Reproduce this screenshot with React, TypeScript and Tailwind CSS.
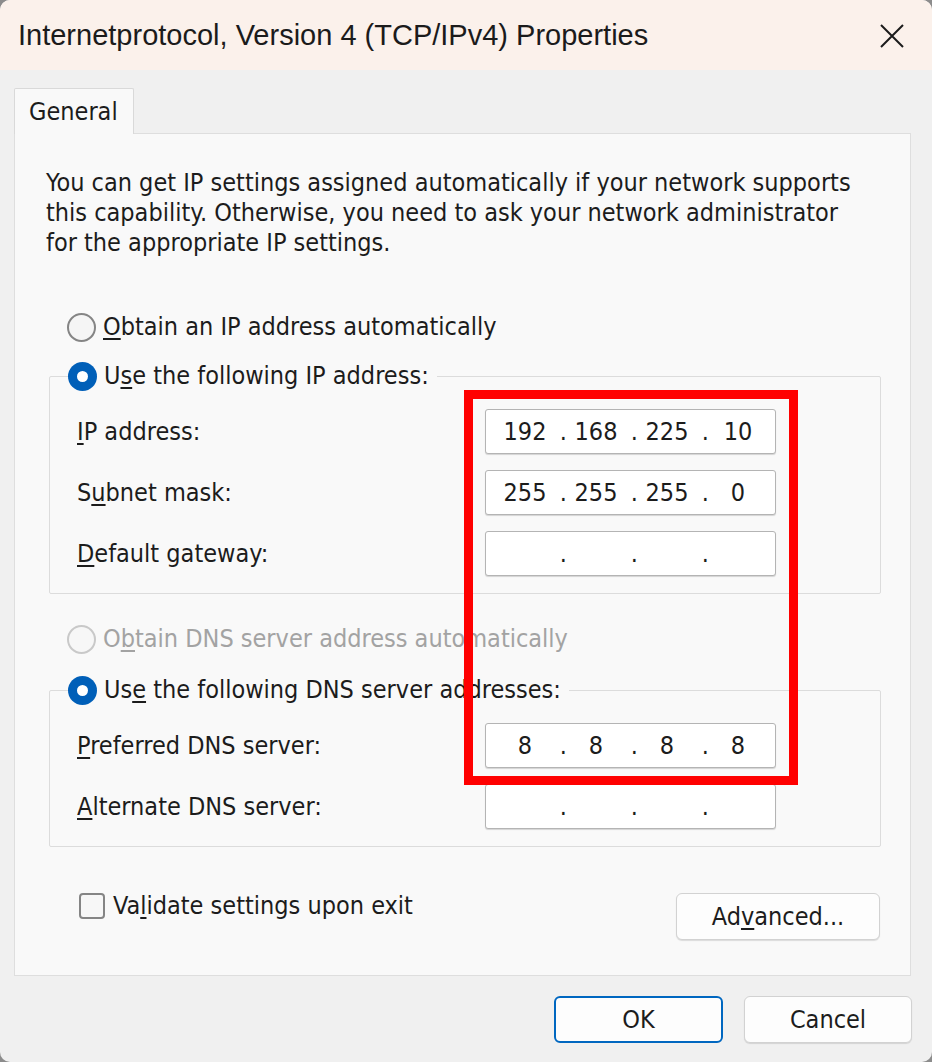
import React from "react";

const body = { fontFamily: '"DejaVu Sans Condensed", "Liberation Sans", Arial, sans-serif' };

function Radio({ checked, disabled }: { checked?: boolean; disabled?: boolean }) {
    if (checked) {
        return (
            <span className="flex items-center justify-center w-[29px] h-[29px] rounded-full bg-[#005fb8] shrink-0">
                <span className="w-[11px] h-[11px] rounded-full bg-white" />
            </span>
        );
    }
    return (
        <span
            className={
                disabled
                    ? "w-[29px] h-[29px] rounded-full border-2 border-[#c9c9c9] bg-[#f7f7f7] shrink-0"
                    : "w-[29px] h-[29px] rounded-full border-2 border-[#858585] bg-[#f5f5f5] shrink-0"
            }
        />
    );
}

function IpField({ parts }: { parts: string[] }) {
    return (
        <div className="flex items-center w-[291px] h-[45px] pl-[10px] bg-white border border-[#b4b4b4] rounded-[3px] shadow-[0_1px_1px_rgba(0,0,0,0.15)] text-[25px] text-[#1c1c1c]">
            {parts.map((p, i) => (
                <React.Fragment key={i}>
                    <span className="w-[58px] text-center">{p}</span>
                    {i < 3 && <span className="w-[13px] text-right">.</span>}
                </React.Fragment>
            ))}
        </div>
    );
}

function Row({ label, parts }: { label: React.ReactNode; parts: string[] }) {
    return (
        <div className="flex items-center justify-between">
            <span>{label}</span>
            <IpField parts={parts} />
        </div>
    );
}

function Group({ legend, children }: { legend: React.ReactNode; children: React.ReactNode }) {
    return (
        <fieldset className="border border-[#dcdcdc] rounded-[2px] ml-[34px] mr-[29px]">
            <legend className="ml-[18px] pr-[8px] h-[30px] flex items-center gap-[7px]">
                <Radio checked />
                <span>{legend}</span>
            </legend>
            <div className="flex flex-col gap-[16px] pt-[18px] pb-[17px] pl-[27px] pr-[104px]">{children}</div>
        </fieldset>
    );
}

export default function App() {
    return (
        <div className="w-[932px] h-[1062px] bg-[#8c8c8c]">
            <div className="relative flex flex-col w-full h-full rounded-[10px] overflow-hidden bg-[#f0f0f0] text-[#1c1c1c]" style={body}>
                {/* title bar */}
                <div className="flex items-center justify-between h-[70px] pl-[18px] pr-[27px] pt-[2px] bg-[#fbf1eb]">
                    <span className="text-[29px] text-[#1b1b1b]" style={{ fontFamily: '"Liberation Sans", Arial, sans-serif' }}>
                        Internetprotocol, Version 4 (TCP/IPv4) Properties
                    </span>
                    <svg width="26" height="26" viewBox="0 0 26 26">
                        <path d="M2 2 L24 24 M24 2 L2 24" stroke="#1b1b1b" strokeWidth="2" />
                    </svg>
                </div>

                <div className="px-[14px] pt-[18px] pr-[21px]">
                    <div className="w-[120px] h-[46px] -mb-px relative z-10 flex items-center pl-[14px] bg-[#f9f9f9] border border-b-0 border-[#d9d9d9] rounded-t-[2px] text-[25px]">
                        General
                    </div>
                    <div className="h-[843px] bg-[#f9f9f9] border border-[#dedede] text-[25px]">
                        <p className="pt-[34px] pl-[31px] leading-[30px] whitespace-nowrap">
                            You can get IP settings assigned automatically if your network supports
                            <br />
                            this capability. Otherwise, you need to ask your network administrator
                            <br />
                            for the appropriate IP settings.
                        </p>

                        <div className="flex items-center gap-[7px] h-[30px] mt-[54px] ml-[52px]">
                            <Radio />
                            <span>
                                <u className="underline-offset-[3px]">O</u>btain an IP address automatically
                            </span>
                        </div>

                        <div className="mt-[19px]">
                            <Group legend={<>U<u className="underline-offset-[3px]">s</u>e the following IP address:</>}>
                                <Row label={<><u className="underline-offset-[3px]">I</u>P address:</>} parts={["192", "168", "225", "10"]} />
                                <Row label={<>S<u className="underline-offset-[3px]">u</u>bnet mask:</>} parts={["255", "255", "255", "0"]} />
                                <Row label={<><u className="underline-offset-[3px]">D</u>efault gateway:</>} parts={["", "", "", ""]} />
                            </Group>
                        </div>

                        <div className="flex items-center gap-[7px] h-[30px] mt-[30px] ml-[52px] text-[#a3a3a3]">
                            <Radio disabled />
                            <span>
                                O<u className="underline-offset-[3px]">b</u>tain DNS server address automatically
                            </span>
                        </div>

                        <div className="mt-[21px]">
                            <Group legend={<>Us<u className="underline-offset-[3px]">e</u> the following DNS server addresses:</>}>
                                <Row label={<><u className="underline-offset-[3px]">P</u>referred DNS server:</>} parts={["8", "8", "8", "8"]} />
                                <Row label={<><u className="underline-offset-[3px]">A</u>lternate DNS server:</>} parts={["", "", "", ""]} />
                            </Group>
                        </div>

                        <div className="flex items-start justify-between mt-[45px] ml-[64px] mr-[30px]">
                            <div className="flex items-center gap-[8px] h-[28px]">
                                <span className="w-[26px] h-[26px] rounded-[4px] border-2 border-[#858585] bg-[#f7f7f7]" />
                                <span>
                                    Va<u className="underline-offset-[3px]">l</u>idate settings upon exit
                                </span>
                            </div>
                            <button className="w-[204px] h-[47px] mt-px bg-[#fdfdfd] border border-[#d2d2d2] rounded-[6px] shadow-[0_1px_1px_rgba(0,0,0,0.12)]">
                                Ad<u className="underline-offset-[3px]">v</u>anced...
                            </button>
                        </div>
                    </div>
                </div>

                <div className="flex justify-end gap-[21px] pt-[20px] pr-[20px] text-[25px]">
                    <button className="w-[169px] h-[47px] bg-[#fdfdfd] border-2 border-[#0067c0] rounded-[6px]">OK</button>
                    <button className="w-[168px] h-[47px] bg-[#fdfdfd] border border-[#d2d2d2] rounded-[6px] shadow-[0_1px_1px_rgba(0,0,0,0.12)]">
                        Cancel
                    </button>
                </div>

                {/* red highlight drawn over the dialog */}
                <div className="absolute left-[464px] top-[390px] w-[334px] h-[395px] border-[9px] border-[#ff0000] pointer-events-none" />
            </div>
        </div>
    );
}
